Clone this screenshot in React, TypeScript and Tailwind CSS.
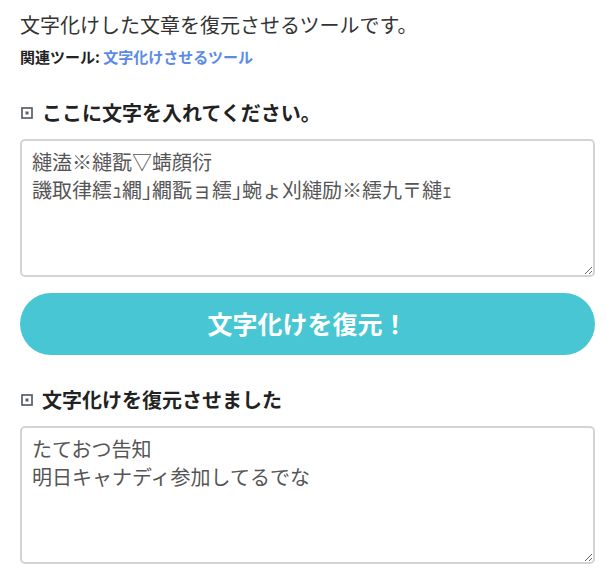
const garbled = "縺溘※縺翫▽蜻顔衍\n譏取律繧ｭ繝｣繝翫ョ繧｣蜿ょ刈縺励※繧九〒縺ｪ";
const restored = "たておつ告知\n明日キャナディ参加してるでな";

function BoxIcon() {
  return (
    <svg width="12" height="12" viewBox="0 0 12 12" className="shrink-0">
      <rect x="1" y="1" width="10" height="10" fill="none" stroke="#5a5e68" strokeWidth="1.7" />
      <rect x="4.5" y="4.5" width="3" height="3" fill="#5a5e68" />
    </svg>
  );
}

function SectionTitle({ children }: { children: string }) {
  return (
    <h2 className="flex items-center gap-[9px] pl-[1px] text-[20px] font-bold leading-[28px] text-[#222]">
      <BoxIcon />
      <span>{children}</span>
    </h2>
  );
}

function TextBox({ value }: { value: string }) {
  return (
    <textarea
      readOnly
      value={value}
      className="mt-[12px] block h-[138px] w-full resize-y rounded-[5px] border-2 border-[#d3d4d8] bg-white px-[10px] py-[7px] text-[20px] leading-[28px] text-[#555] outline-none"
    />
  );
}

export default function App() {
  return (
    <div
      className="min-h-[568px] bg-white pl-[20px] pr-[12px] pt-[11px] text-[#333]"
      style={{ fontFamily: '"Noto Sans CJK JP", "Noto Sans", sans-serif' }}
    >
      <p className="text-[20px] leading-[28px]">文字化けした文章を復元させるツールです。</p>
      <p className="mt-[6px] text-[15px] font-bold leading-[24px] text-[#222]">
        関連ツール: <a href="#" className="text-[#5b8be6]">文字化けさせるツール</a>
      </p>

      <div className="mt-[30px]">
        <SectionTitle>ここに文字を入れてください。</SectionTitle>
        <TextBox value={garbled} />
      </div>

      <button
        type="button"
        className="mt-[16px] flex h-[62px] w-full items-center justify-center rounded-full bg-[#49c6d4] text-[25px] font-bold text-white"
      >
        文字化けを復元！
      </button>

      <div className="mt-[31px]">
        <SectionTitle>文字化けを復元させました</SectionTitle>
        <TextBox value={restored} />
      </div>
    </div>
  );
}
